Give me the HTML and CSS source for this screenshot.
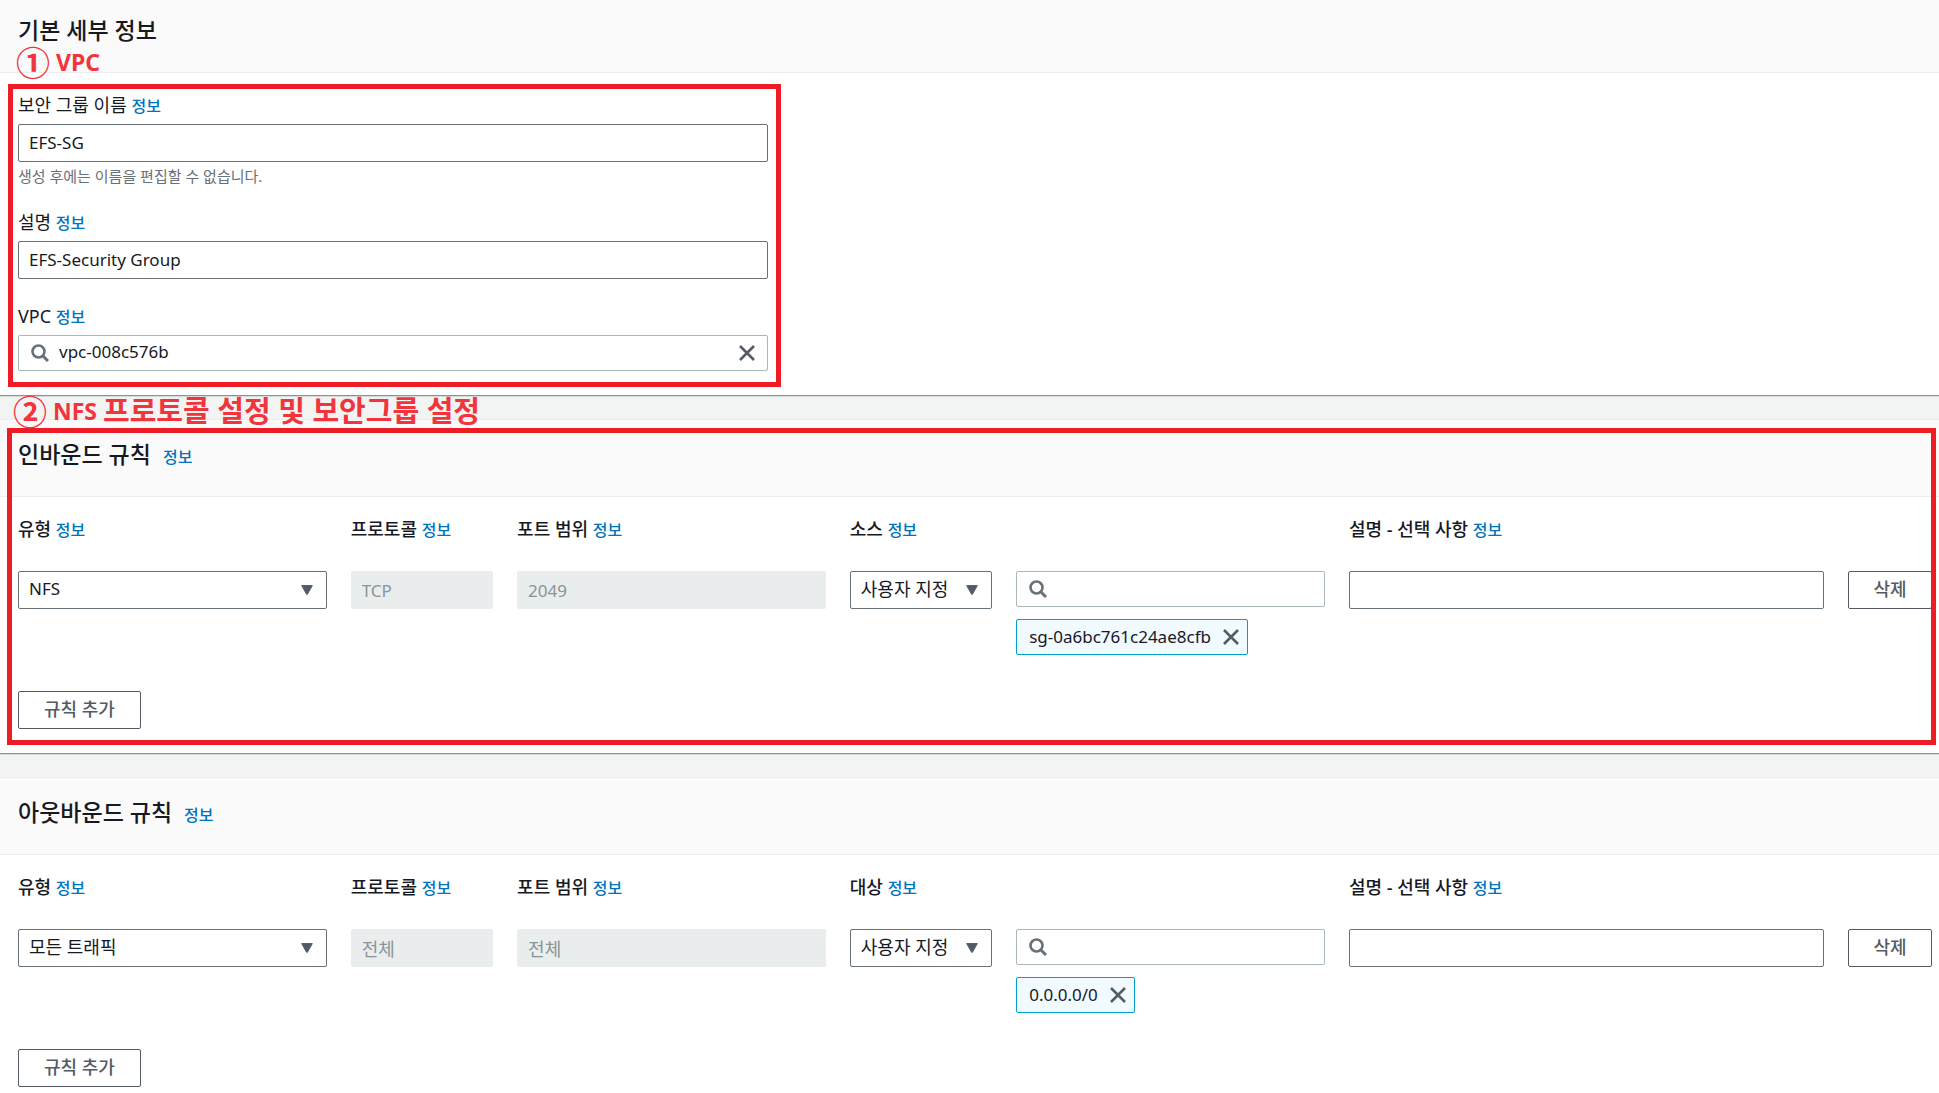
FILE: index.html
```html
<!DOCTYPE html>
<html lang="ko">
<head>
<meta charset="utf-8">
<meta name="viewport" content="width=device-width, initial-scale=1">
<title>보안 그룹 생성</title>
<link rel="stylesheet" href="styles.css">
</head>
<body>
<svg class="sprite" aria-hidden="true">
  <symbol id="search" viewBox="0 0 18 18"><circle cx="7.5" cy="7.5" r="6" fill="none" stroke="currentColor" stroke-width="2.6"/><path d="M12 12l5 5" fill="none" stroke="currentColor" stroke-width="3"/></symbol>
  <symbol id="close" viewBox="0 0 16 16"><path d="M1 1l14 14M15 1L1 15" fill="none" stroke="currentColor" stroke-width="2.6"/></symbol>
  <symbol id="caret" viewBox="0 0 12 10"><path d="M.7 .6h10.600L6.400 9.300h-.8z" fill="currentColor" stroke="currentColor" stroke-linejoin="round"/></symbol>
</svg>
<main>
  <section class="panel panel-first">
    <header class="panel-header"><h2>기본 세부 정보</h2></header>
    <p class="note note-vpc"><span class="note-number">①</span><span class="note-latin">VPC</span></p>
    <div class="panel-body">
      <div class="details">
        <div class="field">
          <div class="label"><label for="name">보안 그룹 이름</label> <a href="#">정보</a></div>
          <input class="control" id="name" type="text" value="EFS-SG">
          <p class="hint">생성 후에는 이름을 편집할 수 없습니다.</p>
        </div>
        <div class="field">
          <div class="label"><label for="desc">설명</label> <a href="#">정보</a></div>
          <input class="control" id="desc" type="text" value="EFS-Security Group">
        </div>
        <div class="field">
          <div class="label"><label for="vpc">VPC</label> <a href="#">정보</a></div>
          <div class="search">
            <svg class="icon-search"><use href="#search"/></svg>
            <input id="vpc" type="text" value="vpc-008c576b">
            <button type="button" class="clear" aria-label="지우기"><svg class="icon-close"><use href="#close"/></svg></button>
          </div>
        </div>
        <div class="frame frame-details"></div>
      </div>
    </div>
  </section>

  <section class="panel">
    <header class="panel-header"><h2>인바운드 규칙</h2><a href="#">정보</a></header>
    <div class="panel-body">
      <div class="rules">
        <div class="label w2"><label for="in-type">유형</label> <a href="#">정보</a></div>
        <div class="label"><label for="in-proto">프로토콜</label> <a href="#">정보</a></div>
        <div class="label w2"><label for="in-port">포트 범위</label> <a href="#">정보</a></div>
        <div class="label w3"><label for="in-source">소스</label> <a href="#">정보</a></div>
        <div class="label w4"><label for="in-desc">설명 - 선택 사항</label> <a href="#">정보</a></div>
        <div class="select w2"><select class="control" id="in-type"><option>NFS</option></select><svg class="icon-caret"><use href="#caret"/></svg></div>
        <input class="control" id="in-proto" type="text" value="TCP" disabled>
        <input class="control w2" id="in-port" type="text" value="2049" disabled>
        <div class="select"><select class="control hangul" id="in-source"><option>사용자 지정</option></select><svg class="icon-caret"><use href="#caret"/></svg></div>
        <div class="lookup w2">
          <div class="search"><svg class="icon-search"><use href="#search"/></svg><input type="text" aria-label="소스 검색"></div>
          <div class="chip"><span>sg-0a6bc761c24ae8cfb</span><button type="button" class="clear" aria-label="제거"><svg class="icon-close"><use href="#close"/></svg></button></div>
        </div>
        <input class="control w3" id="in-desc" type="text">
        <button type="button" class="button">삭제</button>
      </div>
      <button type="button" class="button add">규칙 추가</button>
    </div>
    <div class="frame frame-rules"></div>
    <p class="note note-nfs"><span class="note-number">②</span><span class="note-latin">NFS</span>프로토콜 설정 및 보안그룹 설정</p>
  </section>

  <section class="panel">
    <header class="panel-header"><h2>아웃바운드 규칙</h2><a href="#">정보</a></header>
    <div class="panel-body">
      <div class="rules">
        <div class="label w2"><label for="out-type">유형</label> <a href="#">정보</a></div>
        <div class="label"><label for="out-proto">프로토콜</label> <a href="#">정보</a></div>
        <div class="label w2"><label for="out-port">포트 범위</label> <a href="#">정보</a></div>
        <div class="label w3"><label for="out-target">대상</label> <a href="#">정보</a></div>
        <div class="label w4"><label for="out-desc">설명 - 선택 사항</label> <a href="#">정보</a></div>
        <div class="select w2"><select class="control hangul" id="out-type"><option>모든 트래픽</option></select><svg class="icon-caret"><use href="#caret"/></svg></div>
        <input class="control hangul" id="out-proto" type="text" value="전체" disabled>
        <input class="control hangul w2" id="out-port" type="text" value="전체" disabled>
        <div class="select"><select class="control hangul" id="out-target"><option>사용자 지정</option></select><svg class="icon-caret"><use href="#caret"/></svg></div>
        <div class="lookup w2">
          <div class="search"><svg class="icon-search"><use href="#search"/></svg><input type="text" aria-label="대상 검색"></div>
          <div class="chip"><span>0.0.0.0/0</span><button type="button" class="clear" aria-label="제거"><svg class="icon-close"><use href="#close"/></svg></button></div>
        </div>
        <input class="control w3" id="out-desc" type="text">
        <button type="button" class="button">삭제</button>
      </div>
      <button type="button" class="button add">규칙 추가</button>
    </div>
  </section>
</main>
</body>
</html>
```
FILE: styles.css
```css
* { box-sizing: border-box; }

body {
  margin: 0;
  background: #f2f3f3;
  color: #16191f;
  font: 17px/22px "Noto Sans", "Noto Sans CJK KR", sans-serif;
}

input, select, button { font: inherit; color: inherit; }
h2, p { margin: 0; }
a { color: #0073bb; text-decoration: none; font-size: 16px; line-height: 16px; font-weight: 500; }
.sprite { display: none; }

main { display: grid; gap: 23px; }

.panel {
  position: relative;
  background: #fff;
  border-top: 1px solid #eaeded;
  border-bottom: 1px solid #879596;
  box-shadow: 0 1px 0 #d5dbdb;
}
.panel-first { border-top: 0; }
.panel:last-child { border-bottom: 0; box-shadow: none; }
.panel:last-child .panel-body { padding-bottom: 6px; }

.panel-header {
  display: flex;
  align-items: baseline;
  gap: 12px;
  padding: 19px 18px 27px;
  background: #fafafa;
  border-bottom: 1px solid #eaeded;
}
.panel-first .panel-header { padding-top: 15px; }
h2 { font-size: 23px; line-height: 30px; font-weight: 500; }

.panel-body { padding: 21px 7px 24px 18px; }

.details { position: relative; max-width: 750px; display: grid; gap: 26px; }
.field { display: grid; }
.label { margin-bottom: 8px; white-space: nowrap; font-size: 18px; line-height: 22px; }
.hint { margin-top: 5px; font-size: 15px; line-height: 18px; color: #687078; }

.control {
  width: 100%;
  height: 38px;
  padding: 0 10px 2px;
  background: #fff;
  border: 1px solid #687078;
  border-radius: 2px;
}
.control:disabled { padding-bottom: 0; background: #eaeded; border-color: #eaeded; color: #879596; opacity: 1; }
.hangul { font-size: 18px; }

.select { position: relative; }
.select .control { display: block; appearance: none; }
.icon-caret { position: absolute; right: 14px; top: 14px; width: 12px; height: 10px; color: #545b64; pointer-events: none; }

.search {
  display: flex;
  align-items: center;
  gap: 10px;
  height: 36px;
  padding: 0 12px;
  background: #fff;
  border: 1px solid #aab7b8;
  border-radius: 2px;
}
.search input { flex: 1; min-width: 0; border: 0; padding: 0 0 2px; background: none; outline: 0; }
.icon-search { width: 18px; height: 18px; color: #687078; }
.clear { display: flex; padding: 0; border: 0; background: none; color: #545b64; }
.icon-close { width: 16px; height: 16px; }

.rules {
  display: grid;
  grid-template-columns: repeat(11, minmax(0, 1fr)) 84px;
  column-gap: 24px;
  align-items: start;
}
.rules .label { margin-bottom: 31px; font-weight: 500; }
.w2 { grid-column: span 2; }
.w3 { grid-column: span 3; }
.w4 { grid-column: span 4; }

.lookup { display: grid; gap: 12px; justify-items: start; }
.lookup .search { width: 100%; }
.chip {
  display: flex;
  align-items: center;
  gap: 12px;
  height: 36px;
  padding: 0 8px 0 12px;
  background: #f1faff;
  border: 1px solid #00a1c9;
  border-radius: 2px;
}

.button {
  height: 38px;
  padding: 0 24px 2px;
  background: #fff;
  border: 1px solid #545b64;
  border-radius: 2px;
  color: #545b64;
  font-size: 18px;
  font-weight: 500;
  white-space: nowrap;
}
.add { margin-top: 36px; padding-left: 25px; padding-right: 25px; }

.frame { position: absolute; border: 5px solid #ee1c24; pointer-events: none; }
.frame-details { inset: -10px -13px -16px -10px; }
.frame-rules { inset: 8px 3px 8px 7px; }

.note {
  position: absolute;
  display: flex;
  align-items: center;
  color: #f2343c;
  font-size: 29px;
  line-height: 32px;
  font-weight: 700;
  white-space: nowrap;
}
.note-number { font-family: "Noto Sans CJK KR", sans-serif; font-size: 34px; margin-right: 6px; }
.note-latin { font-size: 23px; margin-right: 6px; }
.note-vpc { left: 16px; top: 46px; }
.note-nfs { left: 13px; top: -25px; }
```
